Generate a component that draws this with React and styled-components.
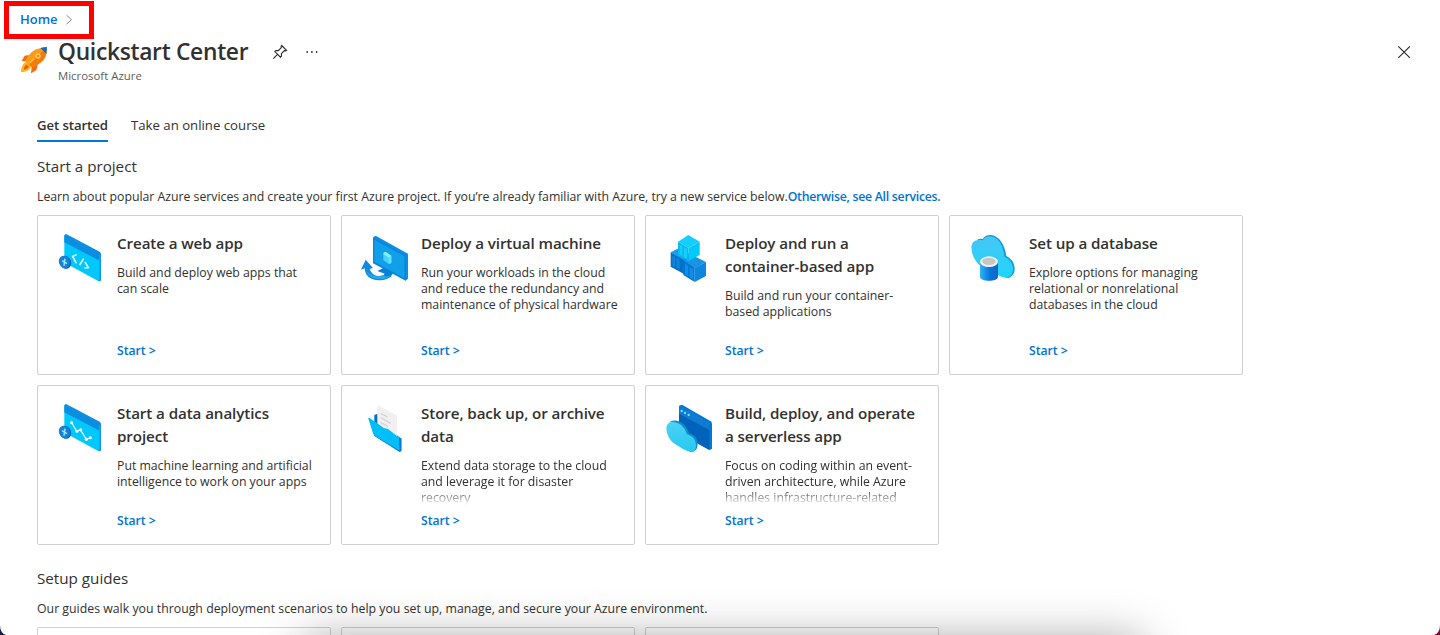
import React from 'react';
import styled, { createGlobalStyle } from 'styled-components';

const GlobalStyle = createGlobalStyle`
  * { box-sizing: border-box; }
  body {
    margin: 0;
    background: #fff;
    color: #323130;
    font-family: "Open Sans", "Noto Sans", sans-serif;
    overflow: hidden;
  }
  h1, h2, h3, p { margin: 0; }
`;

const Page = styled.div`
  position: relative;
  height: 635px;
  overflow: hidden;
  background: #fff;
`;

const Breadcrumb = styled.nav`
  display: flex;
  align-items: center;
  gap: 7px;
  width: 90px;
  height: 38px;
  margin: 1px 0 0 4px;
  padding-left: 11px;
  border: 5px solid #fe0000;
`;

const HomeLink = styled.a`
  color: #0072d4;
  font-size: 13px;
  line-height: 18px;
  font-weight: 600;
  position: relative;
  top: -1px;
`;

const Header = styled.header`
  display: flex;
  align-items: flex-start;
  height: 68px;
  padding: 0 28px 0 12px;
`;

const Rocket = styled.svg`
  width: 44px;
  height: 44px;
  margin-top: -4px;
  flex: none;
`;

const Heading = styled.div`
  margin-left: 2px;
  width: 214px;
  white-space: nowrap;
`;

const Title = styled.h1`
  font-size: 22.8px;
  line-height: 28px;
  font-weight: 600;
  letter-spacing: -0.3px;
  margin-top: -1px;
`;

const Subtitle = styled.p`
  color: #605e5c;
  font-size: 11.4px;
  line-height: 16px;
  margin-top: 2px;
`;

const HeaderIcon = styled.svg`
  width: 16px;
  height: 16px;
  flex: none;
  margin: 5px ${(p) => p.$after || 0} 0 0;
`;

const CloseIcon = styled(HeaderIcon)`
  margin-left: auto;
`;

const Tabs = styled.div`
  display: flex;
  gap: 23px;
  padding-left: 37px;
  height: 35px;
`;

const Tab = styled.div`
  height: 35px;
  padding-top: 9px;
  white-space: nowrap;
  font-size: 13.2px;
  line-height: 18px;
  width: ${(p) => p.$width};
  font-weight: ${(p) => (p.$active ? 600 : 400)};
  letter-spacing: ${(p) => (p.$active ? '-0.09px' : '0')};
  border-bottom: 2px solid ${(p) => (p.$active ? '#0078d4' : 'transparent')};
`;

const Section = styled.section`
  padding: ${(p) => p.$top} 0 0 37px;
`;

const SectionTitle = styled.h2`
  font-size: 15.2px;
  line-height: 22px;
  font-weight: 400;
`;

const Intro = styled.p`
  font-size: 12.3px;
  line-height: 18px;
  letter-spacing: ${(p) => p.$track || '0'};
  margin: 11px 0 9px;
  white-space: nowrap;
  a { color: #0072d4; font-weight: 600; letter-spacing: -0.27px; }
`;

const Grid = styled.div`
  display: grid;
  grid-template-columns: repeat(4, 294px);
  grid-auto-rows: 160px;
  gap: 10px;
`;

const Card = styled.article`
  display: flex;
  gap: 3px;
  padding: 9px 0 0 12px;
  border: 1px solid #d2d0ce;
  border-radius: 2px;
`;

const CardArt = styled.svg`
  width: 64px;
  height: 64px;
  flex: none;
`;

const CardBody = styled.div`
  display: flex;
  flex-direction: column;
  height: 132px;
  padding-top: 7px;
  white-space: nowrap;
`;

const CardTitle = styled.h3`
  font-size: 15.2px;
  line-height: 23px;
  font-weight: 600;
  letter-spacing: -0.1px;
`;

const CopyClip = styled.div`
  flex: 1;
  min-height: 0;
  overflow: hidden;
  margin: 10px 0 8px;
  ${(p) => p.$fade && 'mask-image: linear-gradient(#000 calc(100% - 16px), transparent);'}
`;

const CardCopy = styled.p`
  font-size: 12.3px;
  line-height: 16px;
  letter-spacing: -0.02px;
`;

const StartLink = styled.a`
  color: #0072d4;
  font-size: 12.2px;
  line-height: 16px;
  font-weight: 600;
  margin-bottom: -2px;
`;

const DockShadow = styled.div`
  position: absolute;
  left: 302px;
  top: 638px;
  width: 842px;
  height: 80px;
  border-radius: 14px;
  box-shadow: 0 0 46px rgba(0, 0, 0, 0.34);
`;

const Corner = styled.svg`
  position: absolute;
  bottom: 0;
  ${(p) => p.$side}: 0;
  width: 6px;
  height: 10px;
`;

const Plus = () => (
  <g>
    <ellipse cx="46" cy="112" rx="17" ry="20" transform="rotate(-25 46 112)" fill="#0067bd" />
    <ellipse cx="43" cy="111" rx="16" ry="19" transform="rotate(-25 43 111)" fill="#1482d8" />
    <path d="M36 107l15 9M45 101l-3 21" stroke="#9be6ff" strokeWidth="4.5" />
  </g>
);

const BrowserPane = () => (
  <g>
    <path d="M44 31q0-5 6-3l99 52q4 3 4 8v76q0 5-5 5l-4-2z" fill="#0c8de0" />
    <path d="M43 33q0-5 5-3l96 52q3 3 3 8v75q0 4-4 2l-96-52q-4-3-4-8z" fill="#00c8fc" />
    <path d="M43 34q0-6 5-4l98 52q3 2 3 7v18L43 52z" fill="#0c8de0" />
    <path d="M149 88v76" stroke="#29a9ed" strokeWidth="3" />
  </g>
);

const art = {
  web: (
    <>
      <BrowserPane />
      <path d="M80 89l-12 5 11 21M101 101l-12 19M105 111l10 17-12 1" fill="none" stroke="#f2fcff" strokeWidth="4.5" />
      <Plus />
    </>
  ),
  analytics: (
    <>
      <BrowserPane />
      <path d="M65 83l15 26 11-5 18 29 13-5" fill="none" stroke="#f2fcff" strokeWidth="3.5" />
      <g fill="#f2fcff">
        <circle cx="65" cy="83" r="4.5" />
        <circle cx="81" cy="109" r="4.5" />
        <circle cx="92" cy="104" r="4.5" />
        <circle cx="109" cy="133" r="5" />
        <circle cx="121" cy="128" r="4.5" />
      </g>
      <Plus />
    </>
  ),
  vm: (
    <>
      <path d="M57 37l8-5 97 54v75l-8 6z" fill="#0c8fe2" />
      <path d="M57 37l98 53v77L57 115z" fill="#0a86dc" />
      <path d="M61 44l90 50v65L61 110z" fill="#129fea" />
      <path d="M88 86q0-4 7-5l17 11v20q-2 5-7 5l-17-11z" fill="#45d4fb" />
      <path d="M88 86q0-4 7-5l17 11q-1 5-8 6z" fill="#8eeeff" />
      <path d="M104 98l8-6v20q-2 5-8 5z" fill="#62e0fc" />
      <path d="M35 104l22 25-10 3q5 16 20 20 16 3 30-6l14 3 2 5q-17 13-38 12-41-2-43-36l-11 4z" fill="#0f8ade" />
      <path d="M36 132q6 17 28 21 18 2 34-6l12 5q-16 12-40 10-29-3-34-30z" fill="#27a9ee" />
      <path d="M70 138l18-9 28 15q2 4-4 7l-16 4-7-5 3-4z" fill="#0a7fd4" />
    </>
  ),
  containers: (
    <>
      <path d="M38 82l25-13 43 24-28 14z" fill="#1c9cea" />
      <path d="M38 82l40 23v42l-40-22z" fill="#086fc7" />
      <path d="M78 105l28-14v43l-28 13z" fill="#0062b1" />
      <path d="M43 91v31l8 4V95zM55 97v31l10 5v-31z" fill="#0c84da" />
      <path d="M76 107l32-14 36 18-34 19z" fill="#1c93e1" />
      <path d="M76 107l34 22v42l-34-21z" fill="#0078d4" />
      <path d="M110 129l34-18v42l-34 18z" fill="#0d86dd" />
      <path d="M81 117v31l9 6v-31zM95 126v31l10 6v-31z" fill="#0e8ee4" />
      <path d="M60 50l31-20 34 20-33 19z" fill="#16cdff" />
      <path d="M60 50l32 19v39l-32-17z" fill="#00bcf2" />
      <path d="M92 69l33-19v40l-33 18z" fill="#00c9fb" />
      <path d="M65 59v29l8 5V63zM78 67v29l9 5V71z" fill="#18cdfc" />
    </>
  ),
  database: (
    <>
      <defs>
        <linearGradient id="dbCloud" x1="0" y1="0" x2="0" y2="1">
          <stop offset="0" stopColor="#46c6f5" />
          <stop offset="1" stopColor="#20d5fb" />
        </linearGradient>
        <linearGradient id="dbCan">
          <stop stopColor="#2fb4f6" />
          <stop offset=".55" stopColor="#0875da" />
          <stop offset="1" stopColor="#1266c5" />
        </linearGradient>
      </defs>
      <path d="M46 44q6-5 16-2 9-14 26-12 36 7 45 63 23 11 25 36 1 22-17 30l-10-1z" fill="#0f9bdc" />
      <path d="M28 66q1-20 22-22l12 2q8-13 24-12 33 5 42 62 22 9 25 32 1 29-21 30-15 0-26-10L54 122Q29 99 28 66z" fill="url(#dbCloud)" />
      <path d="M54 109v46c0 16 54 16 54 0v-46z" fill="url(#dbCan)" />
      <ellipse cx="81" cy="110" rx="27" ry="16" fill="#f1f1f1" />
      <ellipse cx="81" cy="109" rx="20" ry="11" fill="#c8c6c4" />
    </>
  ),
  storage: (
    <>
      <path d="M61 60l8-3 10 7v18l63 49v36l-5 4-76-48z" fill="#0070c8" />
      <path d="M70 29l59 33v66l-59-34z" fill="#f0f0f0" />
      <path d="M80 55l21 11M80 68l30 17M80 82l23 13" stroke="#d4d4d4" strokeWidth="4" />
      <path d="M43 71q0-4 4-2l33 23q7 8 22 10l34 26 3 41-76-46q-4-2-6-8z" fill="#00bff8" />
      <path d="M135 132l7-4v39l-5 4z" fill="#0078d4" />
    </>
  ),
  serverless: (
    <>
      <defs>
        <linearGradient id="fnCloud" x1="0" y1="0" x2="0" y2="1">
          <stop stopColor="#4ed0f7" />
          <stop offset="1" stopColor="#25cbee" />
        </linearGradient>
      </defs>
      <path d="M63 35q0-5 9-6l86 50q4 3 4 8v74l-7 4-91-50z" fill="#0078d4" />
      <path d="M63 36l91 49v80l-91-50z" fill="#0062b8" />
      <path d="M63 36q0-5 5-3l87 50v23L63 56z" fill="#0f7bd3" />
      <g fill="#79e3ff">
        <circle cx="71" cy="48" r="3.5" />
        <circle cx="81" cy="54" r="3.5" />
        <circle cx="92" cy="60" r="3.5" />
      </g>
      <path d="M36 80q14-7 29 0 19 8 28 34 22 6 26 30 1 21-14 26l-9 1z" fill="#0c91cf" />
      <path d="M25 100q1-19 19-20 33 3 43 38 24 6 27 31 1 20-14 21-12 0-25-8l-30-19q-19-17-20-43z" fill="url(#fnCloud)" />
    </>
  ),
};

const projects = [
  { art: 'web', title: ['Create a web app'], copy: ['Build and deploy web apps that', 'can scale'] },
  { art: 'vm', title: ['Deploy a virtual machine'], copy: ['Run your workloads in the cloud', 'and reduce the redundancy and', 'maintenance of physical hardware'] },
  { art: 'containers', title: ['Deploy and run a', 'container-based app'], copy: ['Build and run your container-', 'based applications'] },
  { art: 'database', title: ['Set up a database'], copy: ['Explore options for managing', 'relational or nonrelational', 'databases in the cloud'] },
  { art: 'analytics', title: ['Start a data analytics', 'project'], copy: ['Put machine learning and artificial', 'intelligence to work on your apps'] },
  { art: 'storage', title: ['Store, back up, or archive', 'data'], copy: ['Extend data storage to the cloud', 'and leverage it for disaster', 'recovery'], fade: true },
  { art: 'serverless', title: ['Build, deploy, and operate', 'a serverless app'], copy: ['Focus on coding within an event-', 'driven architecture, while Azure', 'handles infrastructure-related'], fade: true },
];

const Lines = ({ items }) =>
  items.map((t, i) => (
    <React.Fragment key={t}>
      {i > 0 && <br />}
      {t}
    </React.Fragment>
  ));

export default function App() {
  return (
    <Page>
      <GlobalStyle />
      <Breadcrumb>
        <HomeLink>Home</HomeLink>
        <svg width="8" height="12" viewBox="0 0 8 12" fill="none" stroke="#8a8886">
          <path d="M1.5 1.2L6.5 5.7 1.5 10.2" />
        </svg>
      </Breadcrumb>

      <Header>
        <Rocket viewBox="0 0 132 132">
          <path d="M51 60L38 62 29 78l12 1zM78 86l-5 20-16 9 2-21z" fill="#f26c0d" />
          <path d="M36 84q-10 13-9 28 17-1 27-10l6-12-13-13z" fill="#ffb818" />
          <path d="M43 88q-8 8-8 16 9 0 16-8z" fill="#ef5b16" />
          <path d="M40 79q12-34 47-40l17 12q-2 31-44 46z" fill="#fb9a1b" />
          <path d="M60 97q40-17 44-46l-8-6L50 88z" fill="#f37b0c" />
          <path d="M85 39q10-3 20-3 0 10-2 20z" fill="#1767bd" />
          <circle cx="78" cy="63" r="8" fill="#ffd15b" />
          <circle cx="78" cy="63" r="4.5" fill="#f98c18" />
          <path d="M53 84l14-13" stroke="#ffcb3e" strokeWidth="4" />
        </Rocket>
        <Heading>
          <Title>Quickstart Center</Title>
          <Subtitle>Microsoft Azure</Subtitle>
        </Heading>
        <HeaderIcon $after="16px" viewBox="0 0 16 16" fill="none" stroke="#292827" strokeWidth="1.1">
          <path d="M9.7 1.5l4.8 4.8-1 .6-1.1-.2-3 3 .1 2.3-1.1 1.2-5.6-5.6L4 6.5l2.3.1 3-3-.2-1.1zM5.5 10.4L1.3 14.6" />
        </HeaderIcon>
        <HeaderIcon viewBox="0 0 16 16" fill="#333">
          <circle cx="3.2" cy="8" r=".9" />
          <circle cx="7.9" cy="8" r=".9" />
          <circle cx="12.6" cy="8" r=".9" />
        </HeaderIcon>
        <CloseIcon viewBox="0 0 16 16" fill="none" stroke="#292827" strokeWidth="1.1">
          <path d="M2.3 2.3l11.6 11.6M13.9 2.3L2.3 13.9" />
        </CloseIcon>
      </Header>

      <Tabs>
        <Tab $active $width="71px">Get started</Tab>
        <Tab>Take an online course</Tab>
      </Tabs>

      <Section $top="13px">
        <SectionTitle>Start a project</SectionTitle>
        <Intro $track="-0.02px">
          Learn about popular Azure services and create your first Azure project. If you’re already familiar with Azure, try a new service below.
          <a>Otherwise, see All services.</a>
        </Intro>
        <Grid>
          {projects.map((p) => (
            <Card key={p.art}>
              <CardArt viewBox="0 0 192 192">{art[p.art]}</CardArt>
              <CardBody>
                <CardTitle><Lines items={p.title} /></CardTitle>
                <CopyClip $fade={p.fade}>
                  <CardCopy><Lines items={p.copy} /></CardCopy>
                </CopyClip>
                <StartLink>Start &gt;</StartLink>
              </CardBody>
            </Card>
          ))}
        </Grid>
      </Section>

      <Section $top="22px">
        <SectionTitle>Setup guides</SectionTitle>
        <Intro $track="0.01px">Our guides walk you through deployment scenarios to help you set up, manage, and secure your Azure environment.</Intro>
        <Grid>
          <Card />
          <Card />
          <Card />
        </Grid>
      </Section>

      <DockShadow />
      <Corner $side="left" viewBox="0 0 6 10"><path d="M0 0Q0 8 6 10H0z" fill="#14204a" /></Corner>
      <Corner $side="right" viewBox="0 0 6 10"><path d="M6 0Q6 8 0 10h6z" fill="#7d0638" /></Corner>
    </Page>
  );
}
